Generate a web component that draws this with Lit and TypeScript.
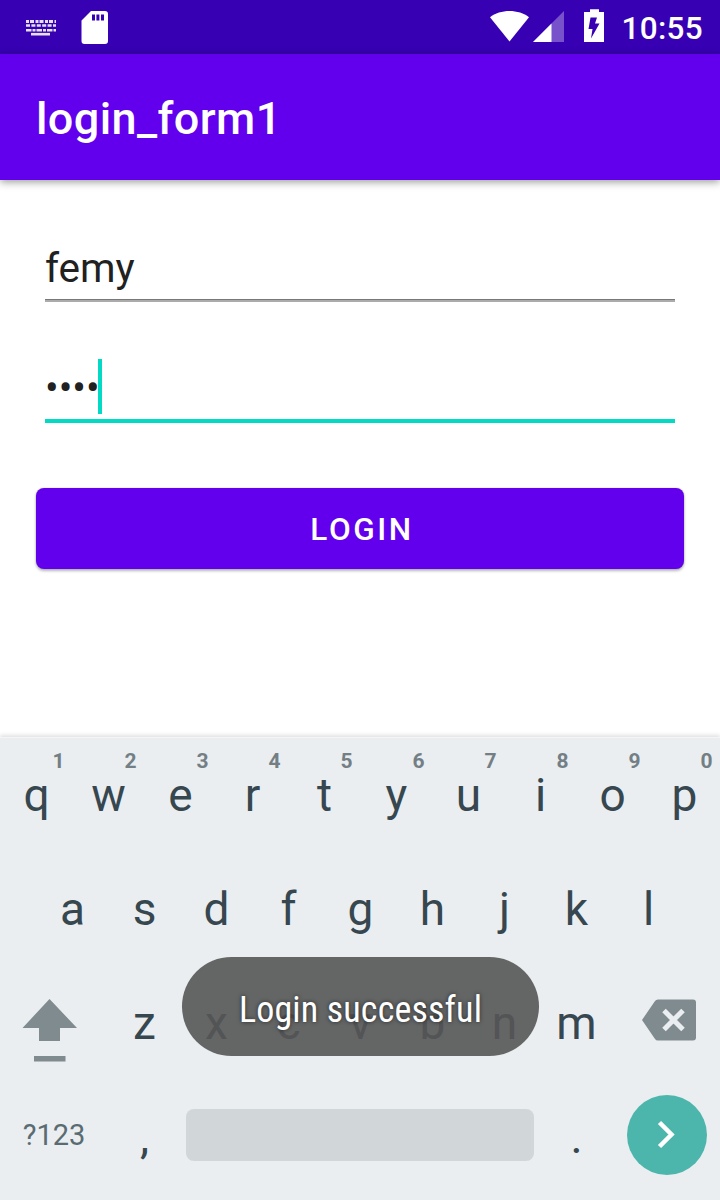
import { LitElement, html, css } from "lit";
import { customElement } from "lit/decorators.js";

@customElement("status-bar")
class StatusBar extends LitElement {
  static styles = css`
    :host { display: flex; height: 54px; background: #3700b3; color: #fff; }
    svg { display: block; flex: none; }
    .clock { margin-left: auto; padding-right: 17px; font-size: 31.5px; font-weight: 500; letter-spacing: .3px; line-height: 57px; white-space: nowrap; }
  `;
  render() {
    return html`
      <svg width="604" height="54" viewBox="0 0 604 54" fill="#fff">
        <g stroke="#fff" stroke-opacity=".88" fill="none">
          <path d="M26 21.5H56" stroke-width="3" stroke-dasharray="3 1 4 1.5"/>
          <path d="M26 25.5H56" stroke-width="2.6" stroke-dasharray="4 1.4"/>
          <path d="M26 30.3H56" stroke-width="2.6" stroke-dasharray="5.5 1 3 1"/>
          <path d="M31 34.2H50" stroke-width="2.6"/>
        </g>
        <path fill-rule="evenodd" d="M91 11H105a3 3 0 0 1 3 3V41a3 3 0 0 1-3 3H84.500a3 3 0 0 1-3-3V20.500ZM92 14.500V20.500H95V14.500ZM96.400 14.500V20.500H99.400V14.500ZM101 14.500V20.500H104V14.500Z"/>
        <path d="M490 17.300C500 9 519 9 529 17.300L509.500 41.500Z"/>
        <path d="M564 11V42H533Z" fill-opacity=".32"/>
        <path d="M551.500 23.500V42H533Z"/>
        <path fill-rule="evenodd" d="M590 12V9.300H599V12H605V42H584V12ZM590.500 17.500H597L595 23.500H599.500L591 38.500L592.500 29H588.500Z"/>
      </svg>
      <div class="clock">10:55</div>
    `;
  }
}

@customElement("login-form")
class LoginForm extends LitElement {
  static styles = css`
    :host { display: block; padding: 50px 36px 0; color: #212121; }
    .field { margin: 0 9px; display: flex; font-size: 40.5px; white-space: nowrap; }
    .user { height: 69px; line-height: 76px; border-bottom: 1px solid #777; box-shadow: 0 2px 0 #ababab; }
    .pass { margin-top: 59px; height: 60px; line-height: 59px; border-bottom: 4px solid #03dac5; }
    .caret { width: 4px; height: 55px; background: #03dac5; margin-left: -1.600px; }
    .login { margin-top: 65px; height: 81px; border-radius: 8px; background: #6200ee; color: #fff; padding-left: 4px; box-sizing: border-box;
      box-shadow: 0 2px 3px rgba(0,0,0,.28), 0 0 2px rgba(0,0,0,.2);
      font-size: 31.5px; font-weight: 500; letter-spacing: 2.600px; line-height: 83px; text-align: center; }
  `;
  render() {
    return html`
      <div class="field user">femy</div>
      <div class="field pass">••••<span class="caret"></span></div>
      <div class="login">LOGIN</div>
    `;
  }
}

@customElement("soft-keyboard")
class SoftKeyboard extends LitElement {
  static styles = css`
    :host { display: block; height: 463px; box-sizing: border-box; border-top: 1px solid #f4f5f6; background: #eaeef1; color: #37474f;
      box-shadow: 0 -2px 4px rgba(0,0,0,.12); }
    .row { display: flex; height: 114px; }
    .indent { padding: 0 36px; }
    .key { position: relative; width: 72px; flex: none; text-align: center; text-indent: 1px; font-size: 46px; line-height: 114px; }
    .hint { position: absolute; left: 22px; width: 72px; top: 11px; font-size: 21px; line-height: 24px; font-weight: 700; color: #737f85; }
    .side { width: 108px; flex: none; }
    .mode { width: 108px; flex: none; text-align: center; font-size: 29px; line-height: 110px; color: #5b6b72; }
    .space { width: 348px; height: 52px; margin: 29px 6px 0; border-radius: 8px; background: #d1d6d9; }
    svg { display: block; }
  `;
  render() {
    return html`
      <div class="row">
        ${[..."qwertyuiop"].map((c, i) => html`<div class="key">${c}<span class="hint">${(i + 1) % 10}</span></div>`)}
      </div>
      <div class="row indent">${[..."asdfghjkl"].map((c) => html`<div class="key">${c}</div>`)}</div>
      <div class="row">
        <svg class="side" width="108" height="114" viewBox="0 966 108 114" fill="#808b90">
          <path d="M49.500 999L77 1028H60V1041H39V1028H22.500Z"/><path d="M34 1056H65.500V1061.500H34Z"/>
        </svg>
        ${[..."zxcvbnm"].map((c) => html`<div class="key">${c}</div>`)}
        <svg class="side" width="108" height="114" viewBox="612 966 108 114">
          <path fill="#808b90" d="M658 999.500H693a3 3 0 0 1 3 3V1037.500a3 3 0 0 1-3 3H658Q656 1040.500 655 1039L642 1020L655 1001Q656 999.500 658 999.500Z"/>
          <path d="M664 1010.500L683 1029.500M683 1010.500L664 1029.500" stroke="#eaeef1" stroke-width="5"/>
        </svg>
      </div>
      <div class="row">
        <div class="mode">?123</div>
        <div class="key">,</div>
        <div class="space"></div>
        <div class="key">.</div>
        <svg class="side" width="108" height="114" viewBox="612 1080 108 114">
          <circle cx="667" cy="1135" r="40" fill="#4db6ac"/>
          <path d="M659.500 1122.500L671.500 1134.500L659.500 1146.500" fill="none" stroke="#fff" stroke-width="4.500"/>
        </svg>
      </div>
    `;
  }
}

@customElement("app-root")
class AppRoot extends LitElement {
  static styles = css`
    :host { position: relative; display: flex; flex-direction: column; width: 720px; height: 1200px; overflow: hidden;
      background: #fff; font-family: Roboto, sans-serif; }
    .bar { height: 126px; flex: none; box-sizing: border-box; padding: 0 36px; background: #6200ee; color: #fff;
      font-size: 45px; font-weight: 500; letter-spacing: .4px; line-height: 129px; box-shadow: 0 2px 8px rgba(0,0,0,.4); }
    soft-keyboard { margin-top: auto; flex: none; }
    .toast { position: absolute; left: 182px; top: 957px; width: 357px; height: 99px; border-radius: 50px;
      background: rgba(85,85,85,.9); color: #fff; display: flex; justify-content: center; }
    .message { font-family: "Roboto Condensed", Roboto, sans-serif; font-stretch: condensed; font-size: 36px; letter-spacing: .15px; line-height: 107px; white-space: nowrap;
      text-shadow: 0 0 4px rgba(0,0,0,.6); }
  `;
  render() {
    return html`
      <status-bar></status-bar>
      <div class="bar">login_form1</div>
      <login-form></login-form>
      <soft-keyboard></soft-keyboard>
      <div class="toast"><span class="message">Login successful</span></div>
    `;
  }
}
